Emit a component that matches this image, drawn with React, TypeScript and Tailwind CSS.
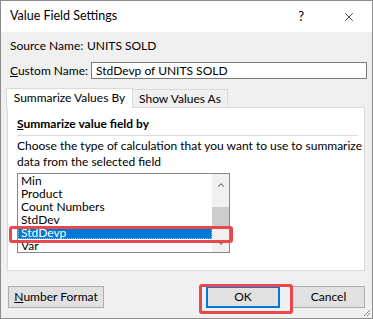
import { X, ChevronUp, ChevronDown } from "lucide-react";

const items = ["Min", "Product", "Count Numbers", "StdDev", "StdDevp", "Var"];

const ValueFieldSettings = () => {
  return (
    <div className="relative w-[373px] h-[319px] bg-[#f0f0f0] border border-[#8c8c8c] font-['Lato',sans-serif] text-[12px] text-black leading-none overflow-hidden whitespace-nowrap">
      <div className="h-[31px] bg-white flex items-center pl-[9px] pr-[16px]">
        <span className="text-[12.5px]">Value Field Settings</span>
        <span className="ml-auto mr-[38px] text-[13px]">?</span>
        <X className="w-[14px] h-[14px]" strokeWidth={1.2} />
      </div>

      <div className="flex items-center pl-[9px] mt-[7px] h-[14px]">
        <span className="w-[77px]">Source Name:</span>
        <span>UNITS SOLD</span>
      </div>

      <div className="flex items-center pl-[9px] mt-[9px]">
        <span className="w-[81px]">
          <span className="underline">C</span>ustom Name:
        </span>
        <div className="w-[276px] h-[17px] border border-[#7a7a7a] bg-white flex items-center px-[4px]">
          StdDevp of UNITS SOLD
        </div>
      </div>

      <div className="flex items-end ml-[5px] mt-[8px] h-[20px]">
        <div className="h-[20px] w-[127px] border-l border-t border-r border-[#d9d9d9] bg-white flex items-center justify-center relative z-10 -mb-px pb-px">
          Summarize Values By
        </div>
        <div className="h-[18px] w-[95px] border-t border-r border-[#d9d9d9] flex items-center justify-center">
          Show Values As
        </div>
      </div>

      <div className="ml-[6px] w-[358px] h-[164px] border border-[#d9d9d9] bg-white px-[9px] pt-[10px]">
        <div className="font-bold h-[13px]">
          <span className="underline">S</span>ummarize value field by
        </div>
        <div className="h-px bg-[#dcdcdc] mt-[4px] mr-[-3px]" />
        <div className="mt-[2px] leading-[16px]">
          Choose the type of calculation that you want to use to summarize
          <br />
          data from the selected field
        </div>
        <div className="mt-[3px] w-[213px] h-[80px] border border-[#828790] flex">
          <div className="flex-1 flex flex-col">
            {items.map((it) => (
              <div
                key={it}
                className={`h-[13px] leading-[13px] pl-[3px] ${
                  it === "StdDevp"
                    ? "bg-[#0078d7] text-white outline-1 outline-dotted outline-[#9bb8d8] -outline-offset-1"
                    : ""
                }`}
              >
                {it}
              </div>
            ))}
          </div>
          <div className="w-[17px] bg-[#f0f0f0] flex flex-col items-center">
            <ChevronUp className="w-[10px] h-[10px] mt-[6px] text-[#606060]" strokeWidth={2.5} />
            <div className="w-[17px] h-[22px] bg-[#cdcdcd] mt-[17px]" />
            <ChevronDown className="w-[10px] h-[10px] mt-auto mb-[4px] text-[#606060]" strokeWidth={2.5} />
          </div>
        </div>
      </div>

      <div className="flex items-center mt-[15px] px-[7px]">
        <button className="w-[96px] h-[22px] bg-[#e1e1e1] border border-[#adadad] flex items-center justify-center">
          <span className="underline">N</span>umber Format
        </button>
        <button className="ml-auto w-[74px] h-[22px] bg-[#e1e1e1] border-2 border-[#0078d7] flex items-center justify-center">
          OK
        </button>
        <button className="ml-[12px] w-[73px] h-[22px] bg-[#e1e1e1] border border-[#adadad] flex items-center justify-center">
          Cancel
        </button>
      </div>

      {/* red callouts */}
      <div className="absolute left-[8px] top-[225px] w-[224px] h-[17px] border-[3px] border-[#e8474b] rounded-[3px]" />
      <div className="absolute left-[198px] top-[283px] w-[94px] h-[30px] border-[3px] border-[#e8474b] rounded-[3px]" />

      <svg className="absolute right-[1px] bottom-[1px]" width="10" height="10" viewBox="0 0 10 10">
        <path d="M9 3 L3 9 M9 6 L6 9" stroke="#8a8a8a" strokeWidth="1" />
      </svg>
    </div>
  );
};

export default function App() {
  return <ValueFieldSettings />;
}
